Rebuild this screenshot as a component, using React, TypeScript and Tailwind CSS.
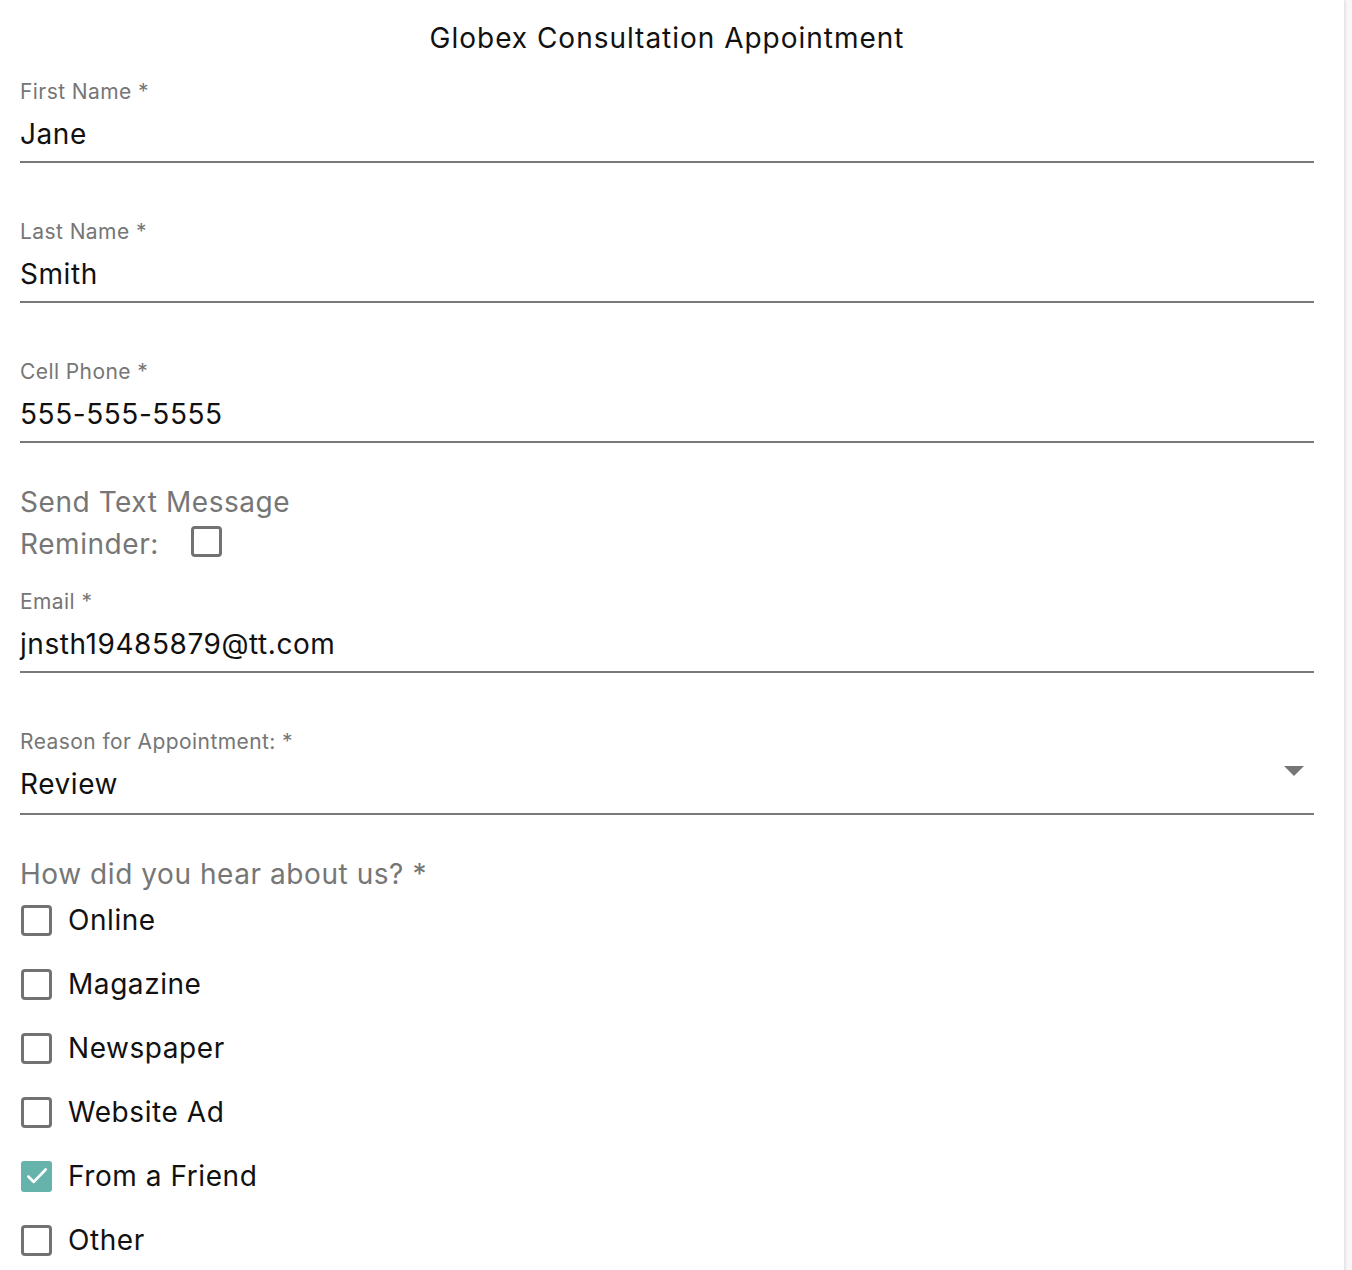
import React from "react";

const FONT = { fontFamily: "Inter, 'Noto Sans', sans-serif" };

function Box({ checked }: { checked?: boolean }) {
  if (checked) {
    return (
      <div className="w-[31px] h-[31px] rounded-[3px] bg-[#66b3ab] flex items-center justify-center shrink-0">
        <svg width="26" height="26" viewBox="0 0 24 24" fill="none" stroke="white" strokeWidth="2.4" strokeLinecap="round" strokeLinejoin="round">
          <path d="M4 12.5l5 5L20 6" />
        </svg>
      </div>
    );
  }
  return <div className="w-[31px] h-[31px] rounded-[4px] border-[3px] border-[#727272] bg-white shrink-0" />;
}

function Field({ label, value, mt }: { label: string; value: string; mt: string }) {
  return (
    <div className={mt}>
      <div className="text-[21px] leading-[24px] text-[#767676] tracking-[0.02em]">{label}</div>
      <div className="mt-[10px] text-[28px] leading-[40px] text-[#111] tracking-[0.02em] pb-[7px] border-b-2 border-[#7a7a7a]">{value}</div>
    </div>
  );
}

export default function App() {
  const opts: [string, boolean][] = [
    ["Online", false],
    ["Magazine", false],
    ["Newspaper", false],
    ["Website Ad", false],
    ["From a Friend", true],
    ["Other", false],
  ];
  return (
    <div className="min-h-[1270px] bg-[#f7f7f9] w-full" style={FONT}>
      <div className="w-[1344px] min-h-[1270px] bg-white shadow-[1px_0_3px_rgba(0,0,0,0.12)] pl-5 pr-[30px] flex flex-col">
        <div className="pt-[17px] text-[28px] leading-[42px] text-center text-[#111] tracking-[0.035em]">Globex Consultation Appointment</div>
        <Field label="First Name *" value="Jane" mt="mt-[21px]" />
        <Field label="Last Name *" value="Smith" mt="mt-[57px]" />
        <Field label="Cell Phone *" value="555-555-5555" mt="mt-[57px]" />
        <div className="mt-[38px] text-[28px] leading-[42px] text-[#767676] tracking-[0.02em]">
          <div>Send Text Message</div>
          <div className="flex items-center">
            <span>Reminder:</span>
            <div className="ml-[32px] -mt-[6px]"><Box /></div>
          </div>
        </div>
        <Field label="Email *" value="jnsth19485879@tt.com" mt="mt-[25px]" />
        <div className="mt-[57px]">
          <div className="text-[21px] leading-[24px] text-[#767676] tracking-[0.02em]">Reason for Appointment: *</div>
          <div className="mt-[10px] text-[28px] leading-[40px] text-[#111] tracking-[0.02em] pb-[9px] border-b-2 border-[#7a7a7a] flex items-center justify-between">
            <span>Review</span>
            <svg width="20" height="10" viewBox="0 0 20 10" className="mr-[10px] -mt-[26px]">
              <path d="M0 0h20L10 10z" fill="#767676" />
            </svg>
          </div>
        </div>
        <div className="mt-[45px] text-[28px] leading-[28px] text-[#767676] tracking-[0.02em]">How did you hear about us? *</div>
        <div className="flex flex-col">
          {opts.map(([t, c]) => (
            <div key={t} className="h-[64px] flex items-center gap-4 pl-px">
              <Box checked={c} />
              <span className="text-[28px] leading-[40px] text-[#111] tracking-[0.02em]">{t}</span>
            </div>
          ))}
        </div>
      </div>
    </div>
  );
}
